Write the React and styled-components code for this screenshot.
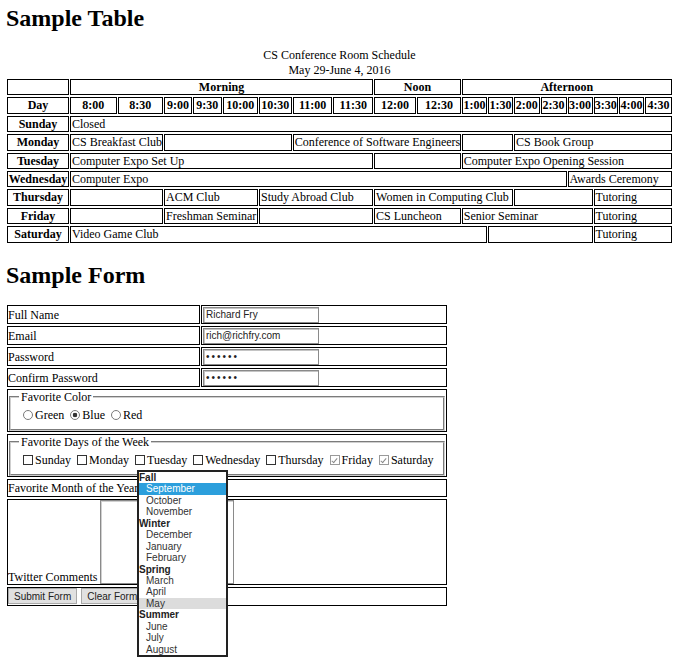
import React from 'react';
import styled, { createGlobalStyle } from 'styled-components';

const GlobalStyle = createGlobalStyle`
  body {
    margin: 0;
    background: #fff;
    color: #000;
    font-family: 'Liberation Serif', 'Times New Roman', serif;
    font-size: 12px;
  }
`;

const Page = styled.div`
  box-sizing: border-box;
  min-height: 671px;
  padding: 0 6px 20px;
`;

const Heading = styled.h1`
  margin: ${(p) => (p.$first ? '4px 0 16px' : '16px 0 14.4px')};
  font-size: 24px;
  line-height: 28px;
  font-weight: bold;
`;

// schedule table
const Schedule = styled.table`
  table-layout: fixed;
  width: 666.7px;
  border-collapse: separate;
  border-spacing: 1px 2px;
`;

const Caption = styled.caption`
  line-height: 14.5px;
  text-align: center;
`;

const HeadCell = styled.th`
  border: 1px solid #000;
  padding: 0;
  height: 14.4px;
  line-height: 14.4px;
  font-weight: bold;
  text-align: center;
  white-space: nowrap;
  overflow: hidden;
`;

const Cell = styled.td`
  border: 1px solid #000;
  padding: 0 0 0 1px;
  height: 14.4px;
  line-height: 14.4px;
  white-space: nowrap;
  overflow: hidden;
`;

// form table
const FormTable = styled.table`
  table-layout: fixed;
  width: 442px;
  border-collapse: separate;
  border-spacing: 1px 2px;
`;

const FormCell = styled.td`
  position: relative;
  border: 1px solid #000;
  padding: 0;
  height: ${(p) => p.$h || 17}px;
  line-height: 14px;
  vertical-align: ${(p) => p.$valign || 'middle'};
  white-space: nowrap;
`;

const TextInput = styled.input`
  display: block;
  box-sizing: border-box;
  width: 116px;
  height: 16px;
  margin: 0 0 0 1px;
  padding: 0 2px;
  border: 1px solid #8a8a8a;
  box-shadow: inset 1px 1px 0 #c4c4c4;
  font-family: 'Liberation Sans', Arial, sans-serif;
  font-size: 10px;
  color: #222;
  outline: none;
  letter-spacing: ${(p) => (p.type === 'password' ? '2px' : 'normal')};
`;

const Group = styled.fieldset`
  margin: 0 1px;
  padding: 4px 8px 7px;
  border: 2px groove #cfcfcf;
  min-width: 0;
`;

const Legend = styled.legend`
  padding: 0 2px;
  line-height: 14px;
`;

const Choices = styled.div`
  display: flex;
  align-items: center;
  padding-left: 4px;
  line-height: 14px;
`;

const Choice = styled.label`
  display: inline-flex;
  align-items: center;
  margin-right: 6px;
`;

const Radio = styled.input.attrs({ type: 'radio' })`
  appearance: none;
  box-sizing: border-box;
  width: 10px;
  height: 10px;
  margin: 0 2px 0 0;
  border: 1px solid #7a7a7a;
  border-radius: 50%;
  background: ${(p) =>
    p.defaultChecked
      ? 'radial-gradient(circle, #333 0 2px, #fff 2.6px)'
      : '#fff'};
`;

const Checkbox = styled.input.attrs({ type: 'checkbox' })`
  appearance: none;
  position: relative;
  box-sizing: border-box;
  width: 10px;
  height: 10px;
  margin: 0 2px 0 0;
  border: 1px solid ${(p) => (p.defaultChecked ? '#9a9a9a' : '#333')};
  background: #fff;

  &:checked::after {
    content: '';
    position: absolute;
    left: 2.5px;
    top: 0.5px;
    width: 2px;
    height: 5px;
    border: solid #8a8a8a;
    border-width: 0 1px 1px 0;
    transform: rotate(40deg);
  }
`;

const CommentRow = styled.div`
  display: flex;
  align-items: flex-end;
`;

const Comments = styled.textarea`
  display: block;
  box-sizing: border-box;
  width: 134px;
  height: 84px;
  margin: 0 0 0 3px;
  padding: 1px;
  border: 1px solid #8a8a8a;
  box-shadow: inset 1px 1px 0 #d0d0d0;
  resize: none;
  outline: none;
`;

const Button = styled.button`
  box-sizing: border-box;
  height: 16px;
  margin: 0 4px 0 0;
  padding: 0 5px;
  border: 1px solid #a9a9a9;
  background: #e1e1e1;
  font-family: 'Liberation Sans', Arial, sans-serif;
  font-size: 10px;
  color: #222;
  vertical-align: top;
`;

const MonthList = styled.ul`
  position: absolute;
  left: 129px;
  top: -10px;
  z-index: 2;
  box-sizing: border-box;
  width: 91px;
  margin: 0;
  padding: 0;
  list-style: none;
  border: 2px solid #222;
  background: #fff;
  font-family: 'Liberation Sans', Arial, sans-serif;
  font-size: 10px;
`;

const Season = styled.li`
  height: 11.45px;
  line-height: 11.45px;
  font-weight: bold;
  color: #222;
`;

const Month = styled.li`
  height: 11.45px;
  line-height: 11.45px;
  padding-left: 7px;
  color: ${(p) => (p.$selected ? '#fff' : '#333')};
  background: ${(p) =>
    p.$selected ? '#2c9fdc' : p.$hover ? '#dcdcdc' : 'transparent'};
`;

const columns = [
  62, 46.5, 45.5, 28, 28.7, 35.3, 32.7, 39.8, 39.5, 42,
  43.7, 25.3, 25, 25.5, 26, 25, 24.5, 25, 26.7,
];

const times = [
  '8:00', '8:30', '9:00', '9:30', '10:00', '10:30', '11:00', '11:30',
  '12:00', '12:30', '1:00', '1:30', '2:00', '2:30', '3:00', '3:30', '4:00', '4:30',
];

const schedule = [
  { day: 'Sunday', events: [['Closed', 18]] },
  {
    day: 'Monday',
    events: [['CS Breakfast Club', 2], ['', 4], ['Conference of Software Engineers', 4], ['', 2], ['CS Book Group', 6]],
  },
  { day: 'Tuesday', events: [['Computer Expo Set Up', 8], ['', 2], ['Computer Expo Opening Session', 8]] },
  { day: 'Wednesday', events: [['Computer Expo', 14], ['Awards Ceremony', 4]] },
  {
    day: 'Thursday',
    events: [['', 2], ['ACM Club', 3], ['Study Abroad Club', 3], ['Women in Computing Club', 4], ['', 3], ['Tutoring', 3]],
  },
  {
    day: 'Friday',
    events: [['', 2], ['Freshman Seminar', 3], ['', 3], ['CS Luncheon', 2], ['Senior Seminar', 5], ['Tutoring', 3]],
  },
  { day: 'Saturday', events: [['Video Game Club', 11], ['', 4], ['Tutoring', 3]] },
];

const seasons = [
  { name: 'Fall', months: ['September', 'October', 'November'] },
  { name: 'Winter', months: ['December', 'January', 'February'] },
  { name: 'Spring', months: ['March', 'April', 'May'] },
  { name: 'Summer', months: ['June', 'July', 'August'] },
];

const days = [
  ['Sunday', false],
  ['Monday', false],
  ['Tuesday', false],
  ['Wednesday', false],
  ['Thursday', false],
  ['Friday', true],
  ['Saturday', true],
];

export default function App() {
  return (
    <>
      <GlobalStyle />
      <Page>
        <Heading $first>Sample Table</Heading>
        <Schedule>
          <Caption>
            CS Conference Room Schedule
            <br />
            May 29-June 4, 2016
          </Caption>
          <colgroup>
            {columns.map((w, i) => (
              <col key={i} style={{ width: w }} />
            ))}
          </colgroup>
          <thead>
            <tr>
              <HeadCell />
              <HeadCell colSpan={8}>Morning</HeadCell>
              <HeadCell colSpan={2}>Noon</HeadCell>
              <HeadCell colSpan={8}>Afternoon</HeadCell>
            </tr>
            <tr>
              <HeadCell>Day</HeadCell>
              {times.map((t) => (
                <HeadCell key={t}>{t}</HeadCell>
              ))}
            </tr>
          </thead>
          <tbody>
            {schedule.map((row) => (
              <tr key={row.day}>
                <HeadCell>{row.day}</HeadCell>
                {row.events.map(([name, span], i) => (
                  <Cell key={i} colSpan={span}>
                    {name}
                  </Cell>
                ))}
              </tr>
            ))}
          </tbody>
        </Schedule>

        <Heading>Sample Form</Heading>
        <form onSubmit={(e) => e.preventDefault()}>
          <FormTable>
            <colgroup>
              <col style={{ width: 193 }} />
              <col style={{ width: 246 }} />
            </colgroup>
            <tbody>
              <tr>
                <FormCell>Full Name</FormCell>
                <FormCell>
                  <TextInput type='text' defaultValue='Richard Fry' />
                </FormCell>
              </tr>
              <tr>
                <FormCell>Email</FormCell>
                <FormCell>
                  <TextInput type='email' defaultValue='rich@richfry.com' />
                </FormCell>
              </tr>
              <tr>
                <FormCell>Password</FormCell>
                <FormCell>
                  <TextInput type='password' defaultValue='secret' />
                </FormCell>
              </tr>
              <tr>
                <FormCell>Confirm Password</FormCell>
                <FormCell>
                  <TextInput type='password' defaultValue='secret' />
                </FormCell>
              </tr>
              <tr>
                <FormCell colSpan={2} $h={41} $valign='top'>
                  <Group>
                    <Legend>Favorite Color</Legend>
                    <Choices>
                      <Choice>
                        <Radio name='color' value='green' />
                        Green
                      </Choice>
                      <Choice>
                        <Radio name='color' value='blue' defaultChecked />
                        Blue
                      </Choice>
                      <Choice>
                        <Radio name='color' value='red' />
                        Red
                      </Choice>
                    </Choices>
                  </Group>
                </FormCell>
              </tr>
              <tr>
                <FormCell colSpan={2} $h={41} $valign='top'>
                  <Group>
                    <Legend>Favorite Days of the Week</Legend>
                    <Choices>
                      {days.map(([d, on]) => (
                        <Choice key={d}>
                          <Checkbox name='days' value={d} defaultChecked={on} />
                          {d}
                        </Choice>
                      ))}
                    </Choices>
                  </Group>
                </FormCell>
              </tr>
              <tr>
                <FormCell colSpan={2} $h={16}>
                  Favorite Month of the Year
                  <MonthList role='listbox'>
                    {seasons.map((s) => (
                      <React.Fragment key={s.name}>
                        <Season>{s.name}</Season>
                        {s.months.map((m) => (
                          <Month
                            key={m}
                            $selected={m === 'September'}
                            $hover={m === 'May'}
                          >
                            {m}
                          </Month>
                        ))}
                      </React.Fragment>
                    ))}
                  </MonthList>
                </FormCell>
              </tr>
              <tr>
                <FormCell colSpan={2} $h={84} $valign='bottom'>
                  <CommentRow>
                    Twitter Comments
                    <Comments />
                  </CommentRow>
                </FormCell>
              </tr>
              <tr>
                <FormCell colSpan={2} $h={17} $valign='top'>
                  <Button type='submit'>Submit Form</Button>
                  <Button type='reset'>Clear Form</Button>
                </FormCell>
              </tr>
            </tbody>
          </FormTable>
        </form>
      </Page>
    </>
  );
}
